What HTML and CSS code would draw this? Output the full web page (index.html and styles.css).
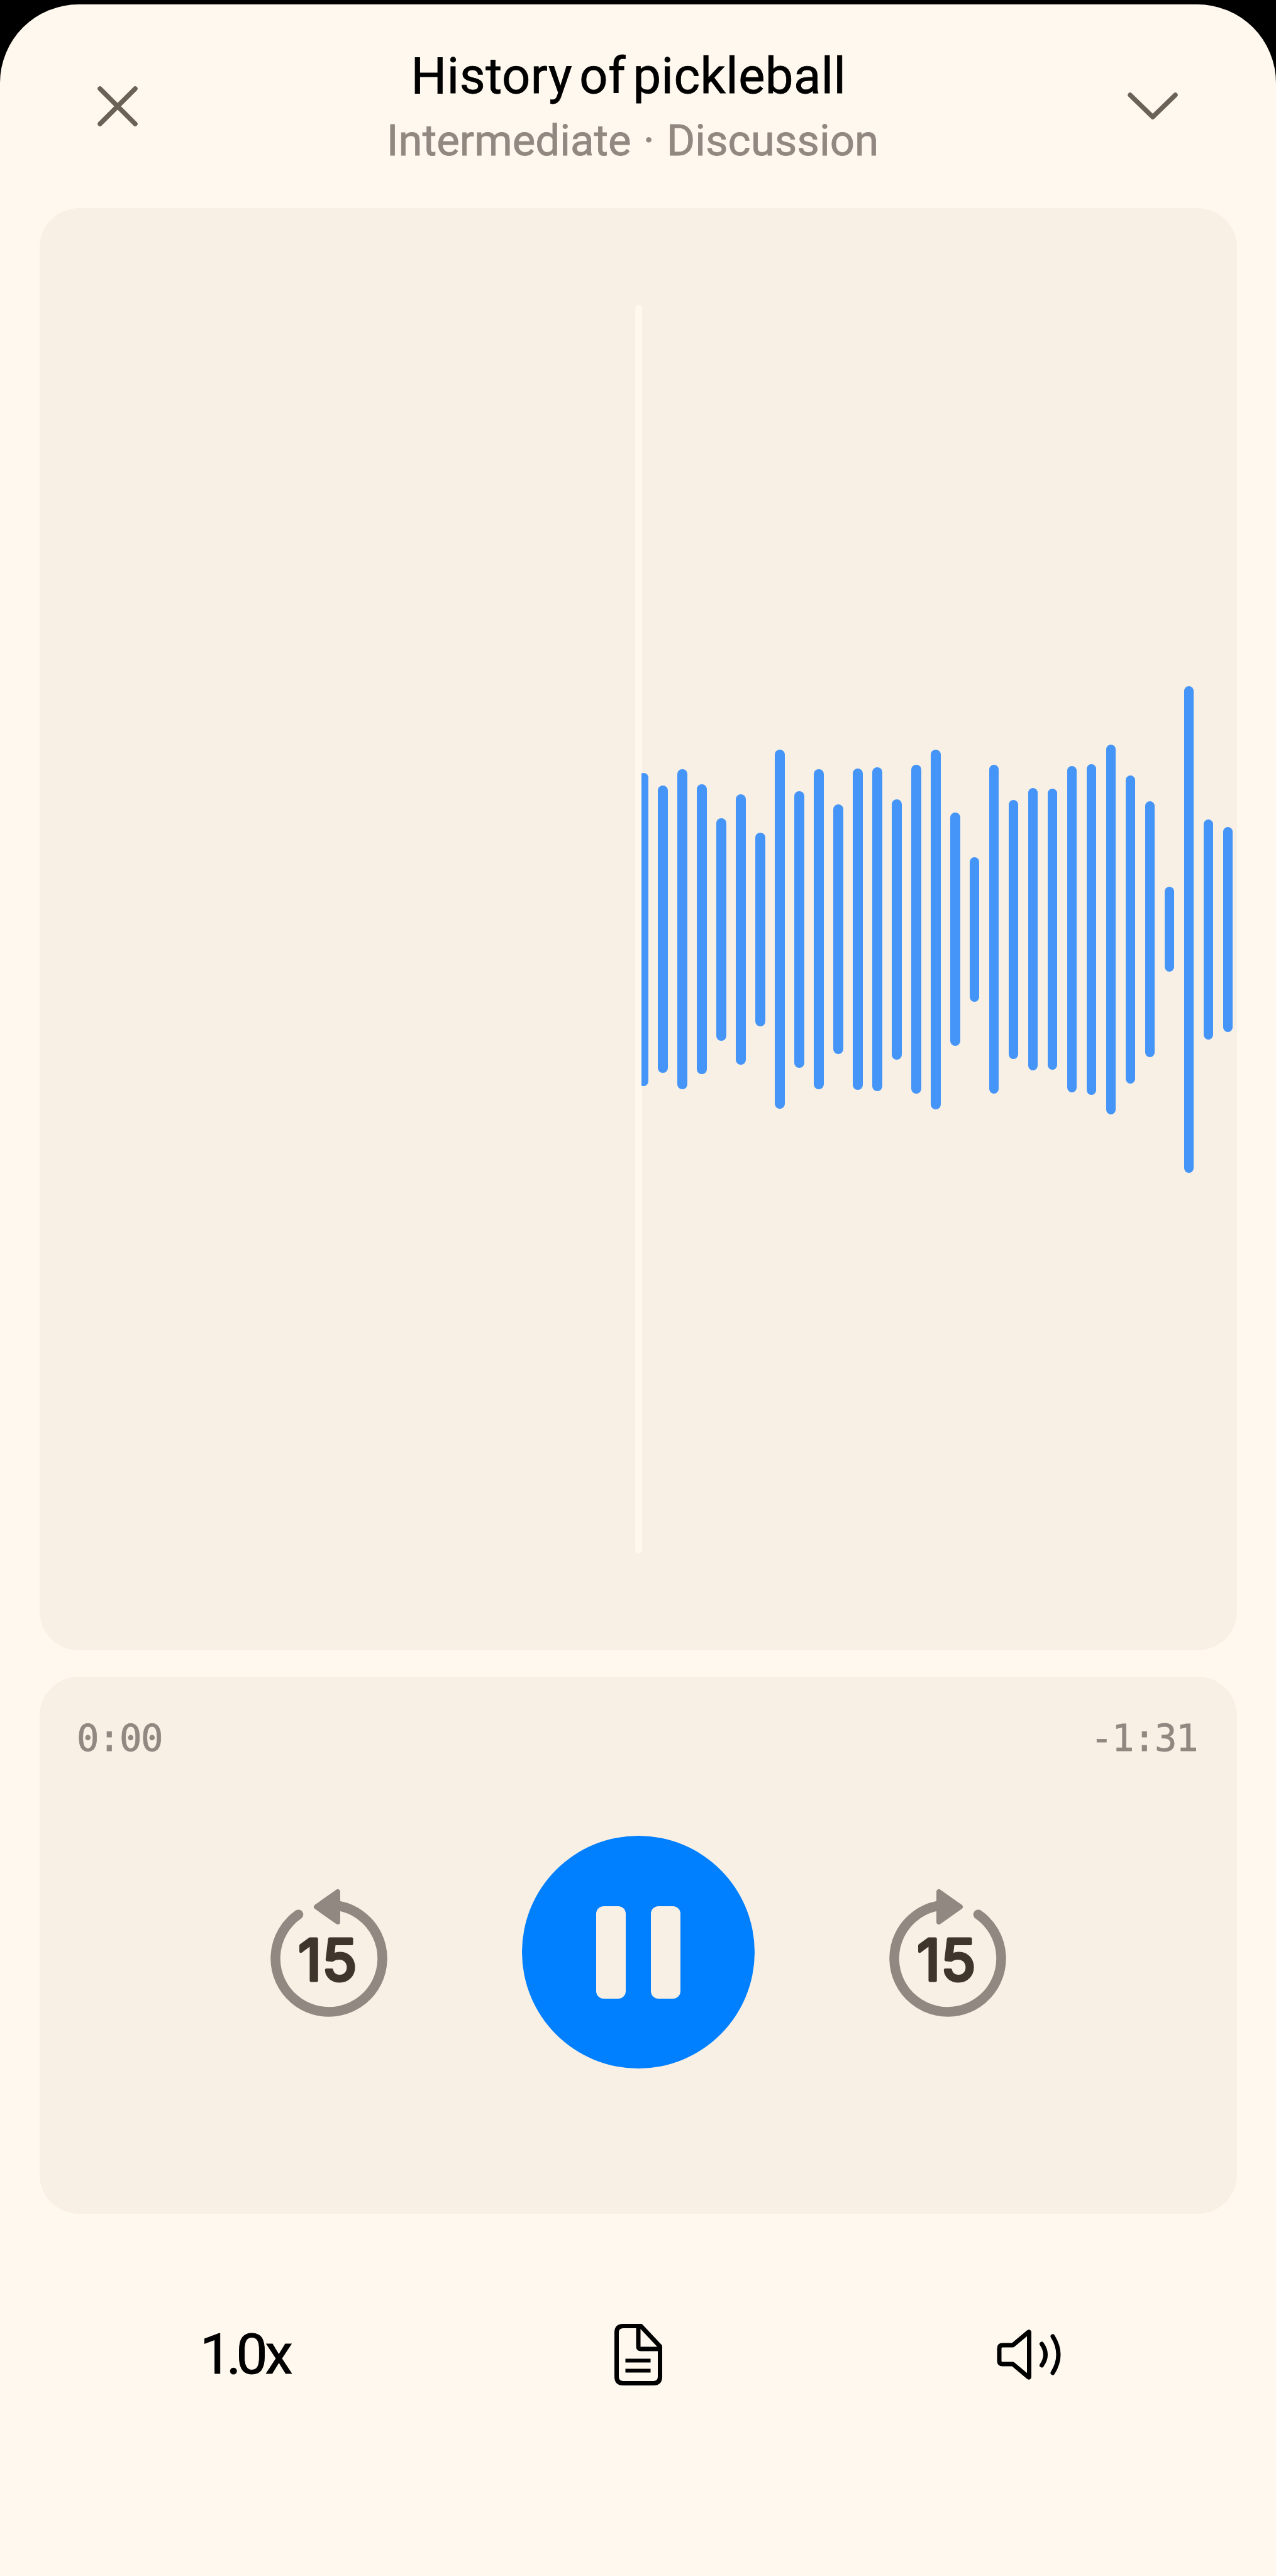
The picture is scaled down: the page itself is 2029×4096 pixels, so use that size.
FILE: index.html
```html
<!DOCTYPE html>
<html lang="en">
<head>
    <meta charset="UTF-8">
    <meta name="viewport" content="width=device-width, initial-scale=1.0">
    <title>History of pickleball</title>
    <link rel="stylesheet" href="styles.css">
</head>
<body>
    <div class="sheet">
        <header class="header">
            <svg class="icon-close" viewBox="0 0 64 64">
                <path d="M4 4L60 60M60 4L4 60"/>
            </svg>
            <div class="titles">
                <h1 class="title">History of pickleball</h1>
                <p class="subtitle">Intermediate · Discussion</p>
            </div>
            <svg class="icon-down" viewBox="0 0 80 44">
                <path d="M4 4L40 39L76 4"/>
            </svg>
        </header>

        <section class="card visualizer">
            <div class="playhead"></div>
            <div class="waveform" id="waveform"></div>
        </section>

        <section class="card player">
            <div class="times">
                <span>0:00</span>
                <span>-1:31</span>
            </div>
            <div class="controls">
                <svg class="skip" viewBox="0 0 200 220">
                    <path class="ring" d="M51.5 50.2A85 85 0 1 0 117 36.7"/>
                    <path class="arrow" d="M114 14V62L80 38Z"/>
                    <text class="skip-text" x="98.5" y="155">15</text>
                </svg>
                <button class="pause">
                    <span class="pause-bar"></span>
                    <span class="pause-bar"></span>
                </button>
                <svg class="skip" viewBox="0 0 200 220">
                    <path class="ring" d="M148.5 50.2A85 85 0 1 1 83 36.7"/>
                    <path class="arrow" d="M86 14V62L120 38Z"/>
                    <text class="skip-text" x="98.5" y="155">15</text>
                </svg>
            </div>
        </section>

        <footer class="toolbar">
            <span class="speed"><span class="speed-value">1.0</span>x</span>
            <svg class="icon-doc" viewBox="0 0 76 98">
                <path d="M14 3.5H42L72.500 36V84Q72.500 94.500 62 94.500H14Q3.500 94.500 3.500 84V14Q3.500 3.500 14 3.500Z"/>
                <path d="M38 4V36Q38 40 42 40H72"/>
                <path class="doc-lines" d="M17.500 58.500H57.500M17.500 74.500H57.500"/>
            </svg>
            <svg class="icon-sound" viewBox="0 0 102 82">
                <path d="M25.500 26L50 5.500Q51.500 4 51.500 6V76Q51.500 78 50 76.500L25.500 56H9Q4 56 4 51V31Q4 26 9 26Z"/>
                <path d="M71.500 24Q83.500 41 71.500 58M89 12Q107 41 89 70"/>
            </svg>
        </footer>
    </div>

    <script>
        const levels = [
            498, 457, 509, 461, 354, 430, 308, 571, 440, 509, 397,
            511, 515, 414, 523, 572, 371, 230, 523, 412, 449, 447,
            519, 526, 588, 490, 407, 135, 774, 350, 326
        ];

        document.getElementById('waveform').innerHTML = levels.map(h =>
            `<span class="bar" style="height: ${h}px"></span>`
        ).join('');
    </script>
</body>
</html>
```

FILE: styles.css
```css
:root {
    --bg-color: #fff8ee;
    --card-bg: #f8f0e4;
    --text-color: #000000;
    --muted: #918981;
    --icon: #6b6257;
    --accent: #007fff;
    --wave: #4595f9;
}

body {
    margin: 0;
    padding-top: 7px;
    background-color: #000000;
    color: var(--text-color);
    font-family: Roboto, sans-serif;
}

.sheet {
    height: 4089px;
    box-sizing: border-box;
    padding: 0 62px 0 63px;
    display: flex;
    flex-direction: column;
    background-color: var(--bg-color);
    border-radius: 125px 125px 0 0;
}

.header {
    height: 324px;
    padding: 0 94px 0 92px;
    display: flex;
    justify-content: space-between;
    align-items: center;
}

.header svg {
    fill: none;
    stroke: var(--icon);
    stroke-width: 7.5;
    stroke-linecap: round;
    stroke-linejoin: round;
}

.icon-close {
    width: 64px;
    height: 64px;
}

.icon-down {
    width: 80px;
    height: 44px;
}

.titles {
    padding-top: 5px;
    text-align: center;
    white-space: nowrap;
}

.title {
    margin: 0 13px 0 0;
    font-size: 79.500px;
    font-weight: 400;
    line-height: 104px;
    letter-spacing: 0.500px;
    word-spacing: -9px;
    -webkit-text-stroke: 0.800px var(--text-color);
}

.subtitle {
    margin: 0;
    color: var(--muted);
    font-size: 69px;
    line-height: 101px;
    word-spacing: 2px;
    -webkit-text-stroke: 0.800px var(--muted);
}

.card {
    background-color: var(--card-bg);
    border-radius: 62px;
    overflow: hidden;
}

.visualizer {
    height: 2293px;
    box-sizing: border-box;
    padding: 154px 0;
    display: flex;
}

.playhead {
    width: 11px;
    margin-left: 947px;
    border-radius: 6px;
    background-color: var(--bg-color);
}

.waveform {
    flex: 1;
    margin-left: -1px;
    display: flex;
    align-items: center;
    gap: 15.480px;
    overflow: hidden;
}

.bar {
    width: 15.500px;
    flex-shrink: 0;
    border-radius: 8px;
    background-color: var(--wave);
}

.bar:first-child {
    margin-left: -4.500px;
}

.player {
    height: 854px;
    margin-top: 42px;
}

.times {
    padding: 58px 63px 0 59px;
    display: flex;
    justify-content: space-between;
    color: var(--muted);
    font-family: "DejaVu Sans Mono", monospace;
    font-size: 59px;
    line-height: 80px;
    letter-spacing: -1.500px;
    -webkit-text-stroke: 0.800px var(--muted);
}

.controls {
    margin-top: 115px;
    display: flex;
    justify-content: center;
    align-items: center;
    gap: 207px;
}

.skip {
    width: 200px;
    height: 220px;
}

.ring {
    fill: none;
    stroke: var(--muted);
    stroke-width: 15.500;
    stroke-linecap: round;
}

.arrow {
    fill: var(--muted);
    stroke: var(--muted);
    stroke-width: 8;
    stroke-linejoin: round;
}

.skip-text {
    font-family: Inter, sans-serif;
    font-size: 91px;
    font-weight: 400;
    letter-spacing: 1px;
    text-anchor: middle;
    fill: #3f352d;
    stroke: #3f352d;
    stroke-width: 5;
    stroke-linejoin: round;
}

.pause {
    width: 370px;
    height: 370px;
    padding: 0;
    display: flex;
    justify-content: center;
    align-items: center;
    gap: 40px;
    border: none;
    border-radius: 50%;
    background-color: var(--accent);
    cursor: pointer;
}

.pause-bar {
    width: 47px;
    height: 147px;
    border-radius: 12px;
    background-color: var(--card-bg);
}

.toolbar {
    height: 447px;
    padding: 0 21px;
    display: grid;
    grid-template-columns: repeat(3, 1fr);
    justify-items: center;
    align-items: center;
}

.toolbar svg {
    fill: none;
    stroke: var(--text-color);
    stroke-width: 7;
    stroke-linecap: round;
    stroke-linejoin: round;
}

.speed {
    padding-right: 5px;
    font-size: 89px;
    -webkit-text-stroke: 1px var(--text-color);
}

.speed-value {
    letter-spacing: -8px;
    margin-right: 4px;
}

.icon-doc {
    width: 76px;
    height: 98px;
}

.toolbar .doc-lines {
    stroke-width: 6;
    stroke-linecap: butt;
}

.icon-sound {
    width: 102px;
    height: 82px;
}
```
